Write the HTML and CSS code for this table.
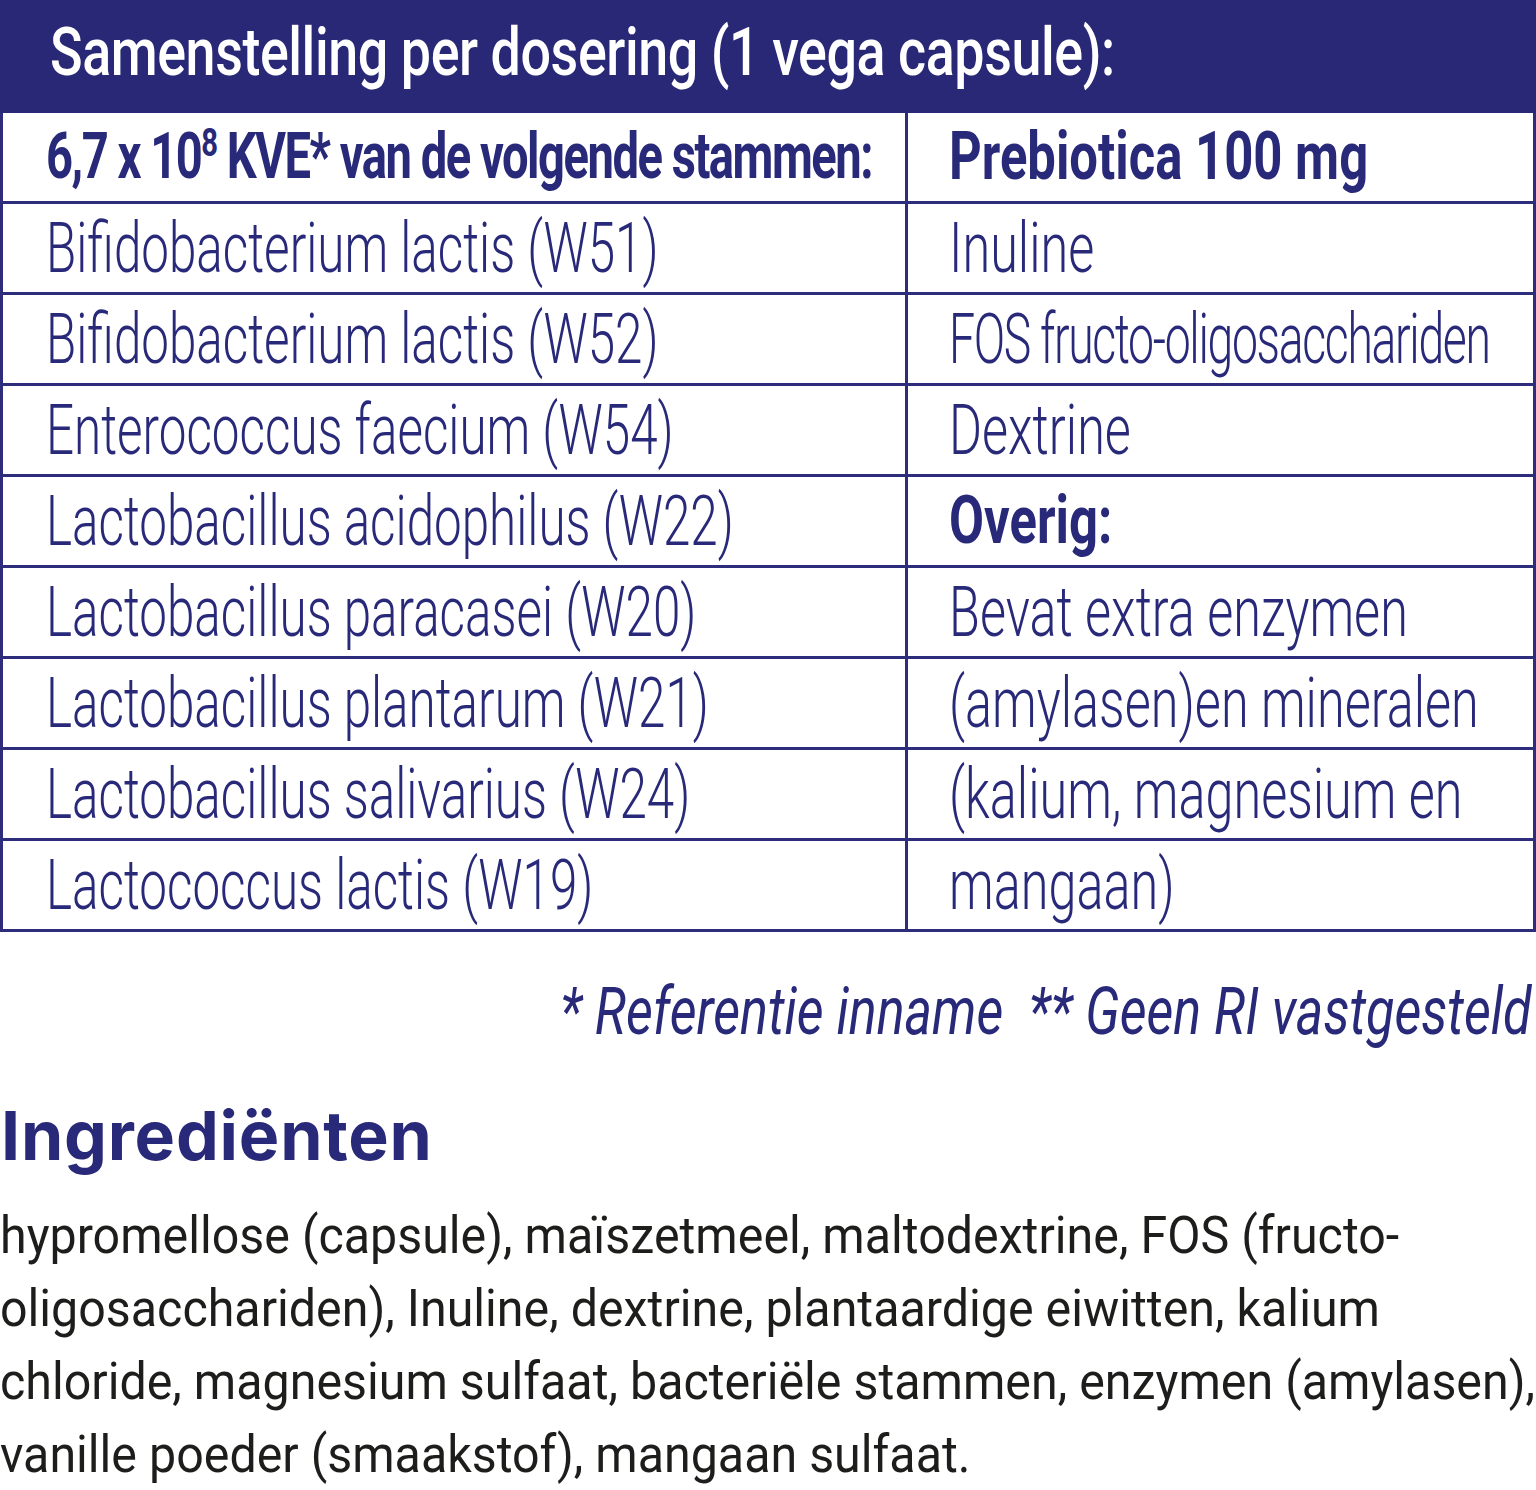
FILE: index.html
```html
<!DOCTYPE html>
<html lang="nl">
<head>
<meta charset="utf-8">
<title>Samenstelling</title>
<link rel="stylesheet" href="styles.css">
</head>
<body>
<table class="comp">
  <colgroup><col class="c1"><col class="c2"></colgroup>
  <thead>
    <tr class="band-row"><th colspan="2" class="band"><span class="sx band-t">Samenstelling per dosering (1 vega capsule):</span></th></tr>
  </thead>
  <tbody>
    <tr><td class="l"><span class="sx bl">6,7 x 10<sup class="sup">8</sup> KVE* van de volgende stammen:</span></td><td class="r"><span class="sx br">Prebiotica 100 mg</span></td></tr>
    <tr><td class="l"><span class="sx tx">Bifidobacterium lactis (W51)</span></td><td class="r"><span class="sx tx">Inuline</span></td></tr>
    <tr><td class="l"><span class="sx tx">Bifidobacterium lactis (W52)</span></td><td class="r"><span class="sx tx fos">FOS fructo-oligosacchariden</span></td></tr>
    <tr><td class="l"><span class="sx tx">Enterococcus faecium (W54)</span></td><td class="r"><span class="sx tx">Dextrine</span></td></tr>
    <tr><td class="l"><span class="sx tx">Lactobacillus acidophilus (W22)</span></td><td class="r"><span class="sx br">Overig:</span></td></tr>
    <tr><td class="l"><span class="sx tx">Lactobacillus paracasei (W20)</span></td><td class="r"><span class="sx tx">Bevat extra enzymen</span></td></tr>
    <tr><td class="l"><span class="sx tx">Lactobacillus plantarum (W21)</span></td><td class="r"><span class="sx tx">(amylasen)en mineralen</span></td></tr>
    <tr><td class="l"><span class="sx tx">Lactobacillus salivarius (W24)</span></td><td class="r"><span class="sx tx">(kalium, magnesium en</span></td></tr>
    <tr><td class="l"><span class="sx tx">Lactococcus lactis (W19)</span></td><td class="r"><span class="sx tx">mangaan)</span></td></tr>
  </tbody>
</table>

<p class="note"><span class="sx note-t">* Referentie inname &nbsp;** Geen RI vastgesteld</span></p>

<h2 class="ing-h">Ingrediënten</h2>
<div class="ing-wrap">
  <p class="ing">hypromellose (capsule), maïszetmeel, maltodextrine, FOS (fructo-<br>oligosacchariden), Inuline, dextrine, plantaardige eiwitten, kalium<br>chloride, magnesium sulfaat, bacteriële stammen, enzymen (amylasen),<br>vanille poeder (smaakstof), mangaan sulfaat.</p>
</div>
</body>
</html>
```

FILE: styles.css
```css
html, body {
  margin: 0;
  padding: 0;
  background: #ffffff;
}
body {
  width: 1536px;
  font-family: Roboto, "Liberation Sans", sans-serif;
  color: #29297a;
  overflow: hidden;
}

.sx {
  display: inline-block;
  white-space: nowrap;
  transform-origin: left center;
}

.comp {
  width: 1533px;
  border-collapse: collapse;
  table-layout: fixed;
}
.c1 { width: 905px; }
.c2 { width: 628px; }

.band {
  background: #282876;
  height: 110px;
  padding: 0 0 8px 47px;
  text-align: left;
  border: 3px solid #282876;
  box-sizing: border-box;
}
.band-t {
  color: #ffffff;
  font-size: 66px;
  font-weight: 500;
  line-height: 1;
  transform: scaleX(0.815);
  letter-spacing: -0.5px;
}

.comp td {
  border: 3px solid #2d2d7c;
  height: 91px;
  padding: 0 0 0 43px;
  box-sizing: border-box;
  vertical-align: middle;
  overflow: hidden;
}
.comp td.r { padding-left: 41px; }

.tx {
  font-size: 70px;
  font-weight: 300;
  line-height: 1;
  transform: scaleX(0.705);
}
.r .tx {
  transform: scaleX(0.72);
}
.r .fos {
  letter-spacing: -2px;
  transform: scaleX(0.662);
}
.bl {
  font-size: 64px;
  font-weight: 700;
  line-height: 1;
  letter-spacing: -2px;
  transform: scaleX(0.736);
}
.br {
  font-size: 66px;
  font-weight: 700;
  line-height: 1;
  transform: scaleX(0.77);
}
.sup {
  font-size: 0.62em;
  vertical-align: 0.55em;
  line-height: 0;
}

.note {
  margin: 47px 4px 0 0;
  text-align: right;
  line-height: 1;
}
.note-t {
  font-size: 66px;
  font-style: italic;
  font-weight: 400;
  transform-origin: right center;
  transform: scaleX(0.79);
}

.ing-h {
  margin: 56px 0 0 1px;
  font-family: Inter, "Open Sans", sans-serif;
  font-weight: 700;
  font-size: 68px;
  line-height: 1;
  letter-spacing: 0.8px;
  color: #29297a;
}

.ing-wrap {
  margin-top: 30px;
}
.ing {
  margin: 0;
  width: 1700px;
  font-size: 52px;
  font-weight: 400;
  line-height: 73px;
  color: #1d1d1b;
  white-space: nowrap;
  transform-origin: left top;
  transform: scaleX(0.93);
}
```
